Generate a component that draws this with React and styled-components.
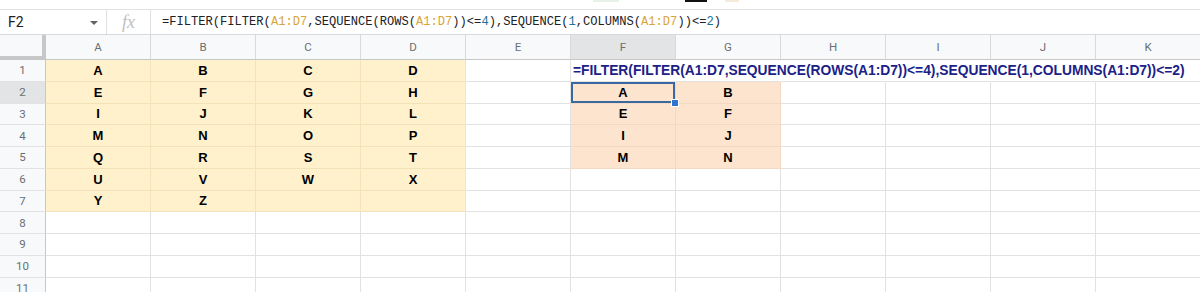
import React from 'react';
import styled, { createGlobalStyle } from 'styled-components';

const Global = createGlobalStyle`
  body {
    margin: 0;
    background: #fff;
    overflow: hidden;
    font-family: Roboto, "Liberation Sans", Arial, sans-serif;
  }
`;

const TopStrip = styled.div`
  height: 9px;
  display: flex;
  align-items: flex-start;
  padding-left: 593px;
  border-bottom: 1px solid #e3e3e3;
`;

const Swatch = styled.div`
  height: 2px;
  width: ${p => p.w}px;
  margin-left: ${p => p.ml}px;
  background: ${p => p.c};
`;

const FormulaBar = styled.div`
  height: 24px;
  display: flex;
  align-items: center;
  border-bottom: 1px solid #d9d9d9;
  color: #202124;
`;

const NameBox = styled.div`
  width: 107px;
  height: 100%;
  display: flex;
  align-items: center;
  justify-content: space-between;
  padding: 0 8px 0 8px;
  box-sizing: border-box;
  font-size: 14px;
  border-right: 1px solid #e0e0e0;
`;

const Caret = styled.span`
  width: 0;
  height: 0;
  border-left: 4px solid transparent;
  border-right: 4px solid transparent;
  border-top: 4px solid #5f6368;
  margin-top: 2px;
`;

const Fx = styled.div`
  width: 44px;
  height: 100%;
  display: flex;
  align-items: center;
  justify-content: center;
  box-sizing: border-box;
  border-right: 1px solid #e0e0e0;
  font-family: "Liberation Serif", serif;
  font-style: italic;
  font-size: 18px;
  color: #c0c0c0;
`;

const FormulaText = styled.div`
  padding-left: 11px;
  font-family: "Liberation Mono", "DejaVu Sans Mono", monospace;
  font-size: 12.1px;
  white-space: nowrap;
`;

const Tok = styled.span`
  color: ${p => (p.kind === 'ref' ? '#d8a53a' : p.kind === 'num' ? '#1e6f94' : '#202124')};
`;

const Grid = styled.div`
  display: grid;
  grid-template-columns: 46px repeat(11, 105px);
  grid-template-rows: 25px repeat(11, 21.75px);
`;

const Corner = styled.div`
  background: #f8f9fa;
  border-right: 4px solid #c7c7c7;
  border-bottom: 4px solid #c7c7c7;
  box-sizing: border-box;
`;

const ColHead = styled.div`
  background: ${p => (p.active ? '#e3e4e6' : '#f8f9fa')};
  border-right: 1px solid #d9d9d9;
  border-bottom: 1px solid #c7c7c7;
  box-sizing: border-box;
  display: flex;
  align-items: center;
  justify-content: center;
  font-size: 11.5px;
  color: #6b6f73;
`;

const RowHead = styled.div`
  background: ${p => (p.active ? '#e3e4e6' : '#f8f9fa')};
  border-right: 1px solid #c7c7c7;
  border-bottom: 1px solid #e2e2e2;
  box-sizing: border-box;
  display: flex;
  align-items: center;
  justify-content: center;
  font-size: 11.5px;
  color: #6b6f73;
`;

const Cell = styled.div`
  position: relative;
  background: ${p => p.bg || 'transparent'};
  border-right: 1px solid ${p => (p.open ? 'transparent' : p.line || '#e2e2e2')};
  border-bottom: 1px solid ${p => p.line || '#e2e2e2'};
  box-sizing: border-box;
  display: flex;
  align-items: center;
  justify-content: ${p => (p.left ? 'flex-start' : 'center')};
  padding-left: ${p => (p.left ? '2px' : '0')};
  font-family: "Liberation Sans", Arial, sans-serif;
  font-weight: 700;
  font-size: ${p => (p.left ? '13.8px' : '13px')};
  color: ${p => p.ink || '#000'};
  white-space: nowrap;
  overflow: visible;
  z-index: ${p => (p.left ? 2 : 'auto')};
  ${p => p.selected && `box-shadow: inset 0 0 0 2px #3a68a0;`}
`;

const Handle = styled.span`
  position: absolute;
  right: -4px;
  bottom: -4px;
  width: 6px;
  height: 6px;
  background: #2f74d0;
  border: 1px solid #fff;
  z-index: 3;
`;

const COLS = ['A', 'B', 'C', 'D', 'E', 'F', 'G', 'H', 'I', 'J', 'K'];
const SRC = 'ABCDEFGHIJKLMNOPQRSTUVWXYZ'.split('');
const FORMULA = '=FILTER(FILTER(A1:D7,SEQUENCE(ROWS(A1:D7))<=4),SEQUENCE(1,COLUMNS(A1:D7))<=2)';

const tokens = [
  ['=FILTER(FILTER('], ['A1:D7', 'ref'], [',SEQUENCE(ROWS('], ['A1:D7', 'ref'], ['))<='],
  ['4', 'num'], ['),SEQUENCE('], ['1', 'num'], [',COLUMNS('], ['A1:D7', 'ref'], ['))<='],
  ['2', 'num'], [')'],
];

function cellProps(r, c) {
  // r: 1-based row, c: 0-based column
  if (c <= 3 && r <= 7) {
    const i = (r - 1) * 4 + c;
    return { bg: '#fef1cc', line: '#f3e3b8', text: SRC[i] || '' };
  }
  if ((c === 5 || c === 6) && r >= 2 && r <= 5) {
    const i = (r - 2) * 4 + (c - 5);
    return { bg: '#fce4cf', line: '#f3d9c2', text: SRC[i], selected: r === 2 && c === 5 };
  }
  if (r === 1 && c === 5) return { text: FORMULA, left: true, open: true, ink: '#1c2187' };
  if (r === 1 && c > 5) return { open: true };
  return {};
}

export default function App() {
  const rows = [];
  for (let r = 1; r <= 11; r++) {
    rows.push(<RowHead key={'h' + r} active={r === 2}>{r}</RowHead>);
    COLS.forEach((col, c) => {
      const { text, selected, ...rest } = cellProps(r, c);
      rows.push(
        <Cell key={col + r} selected={selected} {...rest}>
          {text}
          {selected && <Handle />}
        </Cell>
      );
    });
  }

  return (
    <>
      <Global />
      <TopStrip>
        <Swatch w={26} ml={0} c="#e6f1e8" />
        <Swatch w={22} ml={66} c="#111" />
        <Swatch w={14} ml={18} c="#f6eadb" />
      </TopStrip>
      <FormulaBar>
        <NameBox>
          F2
          <Caret />
        </NameBox>
        <Fx>fx</Fx>
        <FormulaText>
          {tokens.map(([t, k], i) => (
            <Tok key={i} kind={k}>{t}</Tok>
          ))}
        </FormulaText>
      </FormulaBar>
      <Grid>
        <Corner />
        {COLS.map(col => (
          <ColHead key={col} active={col === 'F'}>{col}</ColHead>
        ))}
        {rows}
      </Grid>
    </>
  );
}
